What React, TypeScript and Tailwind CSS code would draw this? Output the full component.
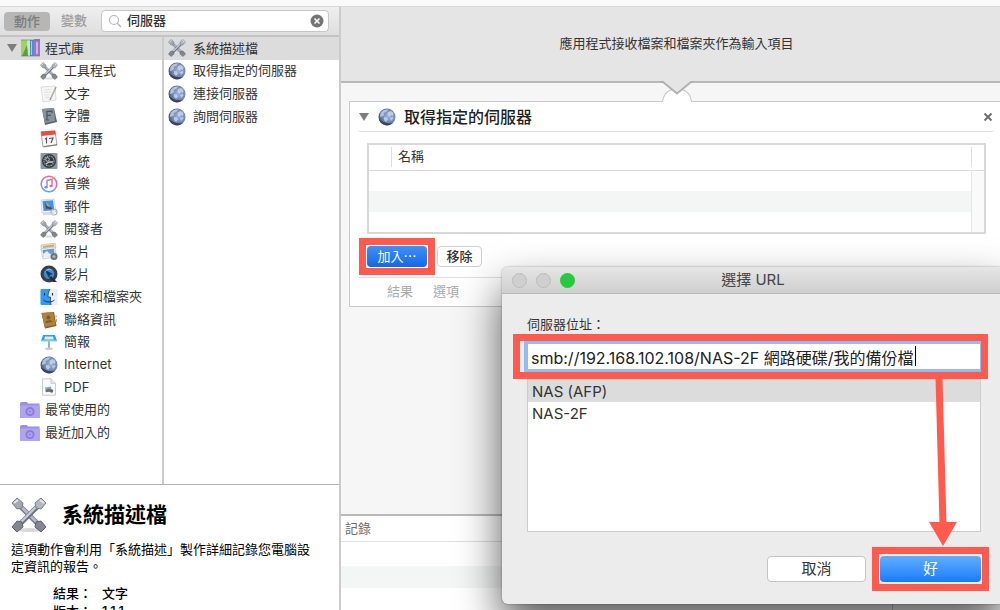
import React, { ReactNode } from "react";
import clsx from "clsx";

interface IconProps {
    className?: string;
}

interface ListItem {
    label: string;
    icon: (props: IconProps) => ReactNode;
}

function ToolsIcon({ className }: IconProps) {
    return (
        <svg viewBox="0 0 36 36" className={className} aria-hidden="true">
            <ellipse cx="18" cy="33" rx="12" ry="2" fill="#d9d9db" />
            <path d="M7 7 29 29" stroke="#777a8c" strokeWidth="5" />
            <path d="M7 6.500 29 28.500" stroke="#b6b8c8" strokeWidth="3" />
            <path d="M29 7 7 29" stroke="#6c6f82" strokeWidth="5" />
            <path d="M28.500 6.500 6.500 28.500" stroke="#c5c7d4" strokeWidth="2.500" />
            <path d="M1 6 6 1l6 5-1 5-5 1z" fill="#a5a7b2" stroke="#7b7d89" strokeWidth="1" />
            <path d="M35 6 30 1l-6 5 1 5 5 1z" fill="#b4b6c0" stroke="#7b7d89" strokeWidth="1" />
            <path d="M1 30l5 5 6-5-1-5-5-1z" fill="#83858f" stroke="#5f616d" strokeWidth="1" />
            <path d="M35 30l-5 5-6-5 1-5 5-1z" fill="#83858f" stroke="#5f616d" strokeWidth="1" />
            <path d="M3 6l4-3M33 6l-4-3" stroke="#e6e7ec" strokeWidth="2" />
        </svg>
    );
}

function GlobeIcon({ className }: IconProps) {
    return (
        <svg viewBox="0 0 18 18" className={className} aria-hidden="true">
            <defs>
                <radialGradient id="globe" cx="0.6" cy="0.45" r="0.65">
                    <stop offset="0" stopColor="#a3b8de" />
                    <stop offset="0.6" stopColor="#6d85b0" />
                    <stop offset="1" stopColor="#3f4c69" />
                </radialGradient>
            </defs>
            <circle cx="9" cy="9" r="8.500" fill="url(#globe)" />
            <path d="M2.500 5c2-3 5-4 8-3.500L8 4 5.500 5l.5 2-2 1.500L2 9zM10 4l3-1 2.500 2-.5 3-2-1-1.500 1.500L9.500 7zM6 9l3 .5 1 2-2 2.500-2-2zM12 10l3-1 .5 1.500-2.500 2.500z" fill="#d5deef" opacity="0.7" />
            <path d="M.8 11c2 6 9 8.500 14 4-5 1-10-.5-14-4z" fill="#39445c" />
        </svg>
    );
}

function LibraryIcon({ className }: IconProps) {
    return (
        <svg viewBox="0 0 20 18" className={className} aria-hidden="true">
            <path d="M1 1h6v16H1z" fill="#a3d25f" />
            <path d="M2 17 7 6l2 11z" fill="#5f9c46" />
            <path d="M7 2h3v15H8z" fill="#cdeaa8" />
            <path d="M10 1h4v16h-4z" fill="#4b8ede" />
            <path d="M11 2h1v14h-1z" fill="#a9d2f7" />
            <path d="M14 0h6v17h-6z" fill="#9a77c9" />
            <path d="M16 3h2v12h-2z" fill="#c9b2e6" />
            <path d="M1 1h19M1 17h19" stroke="#70737c" strokeWidth="0.600" />
        </svg>
    );
}

function TextIcon({ className }: IconProps) {
    return (
        <svg viewBox="0 0 18 18" className={className} aria-hidden="true">
            <path d="M1 2 15 1l1 14-13 2z" fill="#f6f6f4" stroke="#cfcfcf" strokeWidth="0.700" />
            <path d="M4 5l7-.5M4 7.500l7-.5M4.500 10l5-.4M5 12.500l4-.4" stroke="#dcdcdc" strokeWidth="0.800" />
            <path d="M16 2 10 15" stroke="#9a9a9a" strokeWidth="1.500" />
            <path d="M15 4l-4 9" stroke="#dcc296" strokeWidth="0.600" />
        </svg>
    );
}

function FontIcon({ className }: IconProps) {
    return (
        <svg viewBox="0 0 18 18" className={className} aria-hidden="true">
            <path d="M2 2 14 1l3 14-12 3z" fill="#5d656d" />
            <path d="M2 2 14 1l1 13-10 2z" fill="#88929a" />
            <path d="M7 13V4.500l5-.4v2M7 8.500l4-.3M5.500 13H9" fill="none" stroke="#4a535b" strokeWidth="1.200" />
        </svg>
    );
}

function CalendarIcon({ className }: IconProps) {
    return (
        <svg viewBox="0 0 18 18" className={className} aria-hidden="true">
            <path d="M1 2 15 1l2 14-14 2z" fill="#fbfbfb" stroke="#8f8f8f" strokeWidth="0.800" />
            <path d="M1 1.500 15 .5l.6 4L1.500 6z" fill="#ee4b40" />
            <path d="M5 9l1.500-1v5.500M9 8.500l4-.5-2 5" fill="none" stroke="#555" strokeWidth="1.200" />
            <path d="M4 16.500l13-1.800" stroke="#777" strokeWidth="1" />
        </svg>
    );
}

function SystemIcon({ className }: IconProps) {
    return (
        <svg viewBox="0 0 18 18" className={className} aria-hidden="true">
            <rect x="0.500" y="1" width="17" height="16" rx="1" fill="#8a97a5" />
            <circle cx="9" cy="9" r="7" fill="#34383d" />
            <circle cx="9" cy="9" r="5" fill="none" stroke="#a3a8ad" strokeWidth="1.200" strokeDasharray="1.500 0.800" />
            <circle cx="7.500" cy="7.500" r="1.800" fill="none" stroke="#d0d3d6" strokeWidth="0.900" />
            <path d="M9 10h4M6 12l3-2" stroke="#c7cacd" strokeWidth="1.300" />
        </svg>
    );
}

function MusicIcon({ className }: IconProps) {
    return (
        <svg viewBox="0 0 18 18" className={className} aria-hidden="true">
            <defs>
                <linearGradient id="music" x1="0.800" y1="0" x2="0.200" y2="1">
                    <stop offset="0" stopColor="#f4686f" />
                    <stop offset="0.500" stopColor="#b07be0" />
                    <stop offset="1" stopColor="#43b6f3" />
                </linearGradient>
            </defs>
            <circle cx="9" cy="9" r="7.800" fill="#fff" stroke="url(#music)" strokeWidth="1.600" />
            <path d="M7 12V5.500l5-1.300v6.500" fill="none" stroke="url(#music)" strokeWidth="1.500" />
            <ellipse cx="6" cy="12.300" rx="1.600" ry="1.200" fill="#7b86e8" />
            <ellipse cx="11" cy="11" rx="1.600" ry="1.200" fill="#e0609a" />
        </svg>
    );
}

function MailIcon({ className }: IconProps) {
    return (
        <svg viewBox="0 0 18 18" className={className} aria-hidden="true">
            <path d="M1 2 14 1l2 13-14 1z" fill="#f4f4f4" stroke="#b4bcc6" strokeWidth="0.600" />
            <path d="M2.500 3 13 2.200l1.300 10L3.500 13z" fill="#4293e8" />
            <path d="M5 4c1 3 3 4 4 4l4 3-3 .5-2-1-2 .5z" fill="#5b4a3c" />
            <path d="M6 4l3 3 1 2-3-1z" fill="#b9a48c" />
            <circle cx="14" cy="14" r="3" fill="none" stroke="#aab3bd" strokeWidth="1.200" />
            <path d="M3 16h11" stroke="#cbd2da" strokeWidth="1.500" />
        </svg>
    );
}

function PhotosIcon({ className }: IconProps) {
    return (
        <svg viewBox="0 0 18 18" className={className} aria-hidden="true">
            <path d="M1 2 15 0l1 5L1 7z" fill="#ece4d4" stroke="#b8b4aa" strokeWidth="0.600" />
            <path d="M3 3l11-1.500v2L3 5z" fill="#d9a468" />
            <path d="M1 6 15 4l1 10-13 2z" fill="#f8f8f8" stroke="#b0b5ba" strokeWidth="0.600" />
            <path d="M2.500 7 14 5.500l.5 7-11 1.500z" fill="#5b9fd8" />
            <path d="M3 11l4-3 3 3 4-1 .5 3-11 1.500z" fill="#e9eff4" />
            <circle cx="14" cy="13.500" r="3.500" fill="#6d737a" />
            <circle cx="14" cy="13.500" r="1.600" fill="#a9b5c4" />
        </svg>
    );
}

function MovieIcon({ className }: IconProps) {
    return (
        <svg viewBox="0 0 18 18" className={className} aria-hidden="true">
            <circle cx="9" cy="9" r="8.500" fill="#3b3f45" />
            <circle cx="9" cy="8.800" r="5.300" fill="#2f8fe4" />
            <path d="M5 5l8 4-3 1-1 3z" fill="#20364f" />
            <path d="M5.500 6.500c1-2 4-3 6-1.500" stroke="#96d2fb" strokeWidth="1" fill="none" />
            <path d="M11 11l6 6h-4l-4-4z" fill="#2a2d31" />
        </svg>
    );
}

function FinderIcon({ className }: IconProps) {
    return (
        <svg viewBox="0 0 18 18" className={className} aria-hidden="true">
            <rect x="0.500" y="1" width="17" height="16" rx="1" fill="#e6edf4" />
            <path d="M1.500 1H10c-1.500 3-2 5-2 8h2.500c0 3 0 5 .5 8H1.500a1 1 0 0 1-1-1V2a1 1 0 0 1 1-1z" fill="#2c9df2" />
            <path d="M4.500 5v2.500M12.500 5v2.500" stroke="#1c2f44" strokeWidth="1.100" />
            <path d="M3.500 12c3 2.600 8 2.600 11 0" fill="none" stroke="#1c2f44" strokeWidth="0.900" />
            <path d="M10 1c-1.500 3-2 5-2 8h2.500c0 3 0 5 .5 8" fill="none" stroke="#1c2f44" strokeWidth="0.700" />
        </svg>
    );
}

function ContactsIcon({ className }: IconProps) {
    return (
        <svg viewBox="0 0 18 18" className={className} aria-hidden="true">
            <path d="M1.500 2 14 1l2.500 14L5 17.500z" fill="#7e5a2c" />
            <path d="M1.500 2 13 1.200 15.500 14 4.500 16z" fill="#b0803f" />
            <circle cx="8.500" cy="6.500" r="2" fill="#7d592c" />
            <path d="M5 12c.5-3 6.500-4 8-1z" fill="#7d592c" />
            <path d="M16 4v3M16.500 8v3" stroke="#caa15f" strokeWidth="1" />
        </svg>
    );
}

function KeynoteIcon({ className }: IconProps) {
    return (
        <svg viewBox="0 0 18 18" className={className} aria-hidden="true">
            <path d="M3 2h12l2 6H1z" fill="#2f9fe6" />
            <path d="M5 3.500h8l.8 3H4.200z" fill="#dff0fb" />
            <path d="M1 7h16v1.500H1z" fill="#7cc4ef" />
            <path d="M9 8.500V15" stroke="#90979e" strokeWidth="1.600" />
            <ellipse cx="9" cy="15.800" rx="4" ry="1.300" fill="#c9ced3" />
        </svg>
    );
}

function PdfIcon({ className }: IconProps) {
    return (
        <svg viewBox="0 0 18 18" className={className} aria-hidden="true">
            <path d="M2.500.8h8.500l4.500 4.500v12h-13z" fill="#fafafa" stroke="#bdbdbd" strokeWidth="0.800" />
            <path d="M11 .8v4.500h4.500" fill="#ececec" stroke="#bdbdbd" strokeWidth="0.800" />
            <path d="M5 9.500l6-1 .8 5-6 .8z" fill="#86a9c7" />
            <path d="M5.500 12l3-1.500 3 1.500v1.500l-5.500.5z" fill="#6a7179" />
            <circle cx="11.500" cy="13" r="1.800" fill="#60666d" />
        </svg>
    );
}

function SmartFolderIcon({ className }: IconProps) {
    return (
        <svg viewBox="0 0 20 18" className={className} aria-hidden="true">
            <path d="M0 2.500 1 1h6l1 1.500h11.500V17H0z" fill="#9d90e4" />
            <path d="M0 4.500h20V17H0z" fill="#b0a4f0" />
            <circle cx="10" cy="10.500" r="3.600" fill="none" stroke="#8b7cda" strokeWidth="2" />
            <circle cx="10" cy="10.500" r="1" fill="#8b7cda" />
        </svg>
    );
}

const categories: ListItem[] = [
    { label: "工具程式", icon: ToolsIcon },
    { label: "文字", icon: TextIcon },
    { label: "字體", icon: FontIcon },
    { label: "行事曆", icon: CalendarIcon },
    { label: "系統", icon: SystemIcon },
    { label: "音樂", icon: MusicIcon },
    { label: "郵件", icon: MailIcon },
    { label: "開發者", icon: ToolsIcon },
    { label: "照片", icon: PhotosIcon },
    { label: "影片", icon: MovieIcon },
    { label: "檔案和檔案夾", icon: FinderIcon },
    { label: "聯絡資訊", icon: ContactsIcon },
    { label: "簡報", icon: KeynoteIcon },
    { label: "Internet", icon: GlobeIcon },
    { label: "PDF", icon: PdfIcon },
];

const smartFolders = ["最常使用的", "最近加入的"];

const actions: ListItem[] = [
    { label: "系統描述檔", icon: ToolsIcon },
    { label: "取得指定的伺服器", icon: GlobeIcon },
    { label: "連接伺服器", icon: GlobeIcon },
    { label: "詢問伺服器", icon: GlobeIcon },
];

function Sidebar() {
    return (
        <aside className="flex w-[341px] shrink-0 flex-col border-r-2 border-[#cbcbcb] bg-white">
            <div className="flex h-[30px] shrink-0 items-center border-b-2 border-[#c4c4c4] bg-linear-to-b from-[#efefef] to-[#dedede] pr-[10px] pl-1">
                <button className="h-[19px] w-[46px] shrink-0 rounded bg-[#b6b6b6] font-medium text-[#7c7c7c]">動作</button>
                <button className="ml-[11px] shrink-0 font-medium text-[#9b9b9b]">變數</button>
                <div className="ml-[14px] flex h-[22px] min-w-0 flex-1 items-center rounded border border-[#c6c6c6] bg-white pr-1 pl-[5px]">
                    <svg viewBox="0 0 16 16" className="size-4 shrink-0" aria-hidden="true">
                        <circle cx="7" cy="7" r="4.500" fill="none" stroke="#b5b5b5" strokeWidth="1.200" />
                        <path d="M10.300 10.300 14 14" stroke="#b5b5b5" strokeWidth="1.300" />
                    </svg>
                    <input aria-label="搜尋" defaultValue="伺服器" className="ml-1 min-w-0 flex-1 bg-transparent font-medium text-[#333] outline-none" />
                    <button aria-label="清除" className="shrink-0">
                        <svg viewBox="0 0 14 14" className="size-[14px]" aria-hidden="true">
                            <circle cx="7" cy="7" r="6.500" fill="#757575" />
                            <path d="m4.500 4.500 5 5m0-5-5 5" stroke="#fff" strokeWidth="1.500" />
                        </svg>
                    </button>
                </div>
            </div>

            <div className="flex min-h-0 flex-1">
                <ul className="flex h-[407px] w-[162px] flex-col">
                    <li className="flex flex-1 items-center bg-[#dcdcdc] pl-[7px]">
                        <svg viewBox="0 0 10 8" className="h-2 w-[10px]" aria-hidden="true">
                            <path d="M0 0h10L5 8z" fill="#7d7d7d" />
                        </svg>
                        <LibraryIcon className="ml-[3px] h-[18px] w-5" />
                        <span className="ml-[5px]">程式庫</span>
                    </li>
                    {categories.map(({ label, icon: Icon }) => (
                        <li key={label} className="flex flex-1 items-center pl-10">
                            <Icon className="size-[18px]" />
                            <span className="ml-[6px]">{label}</span>
                        </li>
                    ))}
                    {smartFolders.map((label) => (
                        <li key={label} className="flex flex-1 items-center pl-5">
                            <SmartFolderIcon className="h-[18px] w-5" />
                            <span className="ml-[5px]">{label}</span>
                        </li>
                    ))}
                </ul>
                <div className="flex-1 border-l-2 border-[#cbcbcb]">
                    <ul className="flex h-[91px] flex-col">
                        {actions.map(({ label, icon: Icon }, i) => (
                            <li key={label} className={clsx("flex flex-1 items-center pl-1", i === 0 && "bg-[#dcdcdc]")}>
                                <Icon className="size-[18px]" />
                                <span className="ml-[7px]">{label}</span>
                            </li>
                        ))}
                    </ul>
                </div>
            </div>

            <section className="h-[126px] shrink-0 overflow-hidden border-t border-[#b4b4b4] px-[11px] pt-3 text-black">
                <div className="flex items-center">
                    <ToolsIcon className="size-9" />
                    <h2 className="ml-[15px] text-[21px] leading-9 font-bold">系統描述檔</h2>
                </div>
                <p className="mt-2 leading-[17px]">
                    這項動作會利用「系統描述」製作詳細記錄您電腦設
                    <br />
                    定資訊的報告。
                </p>
                <dl className="mt-[9px] grid grid-cols-[91px_1fr] leading-[18px] font-medium">
                    <dt className="pl-[42px]">結果：</dt>
                    <dd>文字</dd>
                    <dt className="pl-[42px]">版本：</dt>
                    <dd>1.1.1</dd>
                </dl>
            </section>
        </aside>
    );
}

function ActionCard() {
    return (
        <section className="-mr-1 ml-2 border border-[#c9c9c9] bg-white pr-[10px] pl-[9px]">
            <header className="flex h-[30px] items-center border-b border-[#dcdfe0]">
                <svg viewBox="0 0 10 8" className="h-2 w-[10px]" aria-hidden="true">
                    <path d="M0 0h10L5 8z" fill="#7d7d7d" />
                </svg>
                <GlobeIcon className="ml-[9px] size-[18px]" />
                <h3 className="ml-2 text-[16px] font-medium text-[#222]">取得指定的伺服器</h3>
                <button aria-label="關閉" className="ml-auto">
                    <svg viewBox="0 0 10 10" className="size-[10px]" aria-hidden="true">
                        <path d="m1.500 1.500 7 7m0-7-7 7" stroke="#6e6e6e" strokeWidth="2" />
                    </svg>
                </button>
            </header>

            <div className="pt-[11px] pr-[7px] pl-2">
                <table className="w-full border-2 border-[#d8d8d8] text-left">
                    <thead>
                        <tr className="h-[26px] border-b border-[#d9d9d9]">
                            <th className="w-6 p-0">
                                <div className="h-5 border-r border-[#dedede]" />
                            </th>
                            <th className="p-0 pb-[2px] pl-[6px] font-normal">名稱</th>
                            <th className="w-[14px] p-0">
                                <div className="h-5 border-l border-[#dedede]" />
                            </th>
                        </tr>
                    </thead>
                    <tbody>
                        {[0, 1, 2].map((row) => (
                            <tr key={row} className={clsx("h-[21px]", row === 1 && "bg-[#f4f5f5]")}>
                                <td colSpan={2} />
                                <td className="border-l border-[#e6e6e6] bg-[#fafafa]" />
                            </tr>
                        ))}
                    </tbody>
                </table>

                <div className="mt-3 flex h-[21px] gap-[10px]">
                    <div className="relative">
                        <button className="h-[21px] w-[60px] rounded bg-linear-to-b from-[#3f90f7] to-[#1268e6] text-white">加入⋯</button>
                        <div className="pointer-events-none absolute -inset-2 border-[7px] border-[#ff5a4e]" />
                    </div>
                    <button className="h-[21px] w-[45px] rounded border border-[#cfcfcf] bg-white font-medium text-[#333]">移除</button>
                </div>
            </div>

            <footer className="mt-[10px] flex h-[29px] items-center gap-5 border-t border-[#dcdfe0] pl-7 text-[#a9a9a9]">
                <button>結果</button>
                <button>選項</button>
            </footer>
        </section>
    );
}

function Workflow() {
    return (
        <main className="flex min-w-0 flex-1 flex-col overflow-hidden bg-[#f6f6f6]">
            <div className="flex h-[76px] shrink-0 items-center justify-center border-b-2 border-[#b9b9b9] bg-[#e5e5e5] pl-3">
                <p>應用程式接收檔案和檔案夾作為輸入項目</p>
            </div>
            <div className="relative min-h-0 flex-1 pt-[18px]">
                <ActionCard />
                {/* connector between the input bar and the first action */}
                <div className="absolute inset-x-0 -top-[2px] flex justify-center pl-3">
                    <svg viewBox="0 0 34 22" className="h-[22px] w-[34px]" aria-hidden="true">
                        <path d="M2 22c1-9 7-13 15-13s14 4 15 13z" fill="#fff" />
                        <path d="M0 20.500h2.500C4 11 10 8 17 8s13 3 14.500 12.500H34" fill="none" stroke="#c9c9c9" strokeWidth="1.200" />
                        <path d="M1 0h32L17 13z" fill="#e5e5e5" />
                        <path d="M0 1h3l14 11.500L31 1h3" fill="none" stroke="#b0b0b0" strokeWidth="1.800" />
                    </svg>
                </div>
            </div>
            <section className="h-[96px] shrink-0 overflow-hidden border-t-2 border-[#b9b9b9] bg-white">
                <h4 className="h-[26px] border-b border-[#dedede] pl-1 leading-6 text-[#6b6b6b]">記錄</h4>
                <div className="h-6" />
                <div className="h-[22px] bg-[#f4f5f5]" />
                <div className="grid h-6 grid-cols-[1fr_107px]">
                    <div className="border-r border-[#c9c9c9]" />
                </div>
            </section>
        </main>
    );
}

function UrlDialog() {
    return (
        <div
            role="dialog"
            aria-labelledby="dialog-title"
            className="absolute top-[267px] -right-1 left-[502px] rounded-md bg-[#ececec] shadow-[0_22px_44px_rgba(0,0,0,0.65),0_0_2px_rgba(0,0,0,0.4)]"
        >
            <div className="flex h-[27px] items-center rounded-t-md border-b border-[#b9b9b9] bg-linear-to-b from-[#e6e6e6] to-[#cfcfcf] px-[10px]">
                <div className="flex flex-1 gap-[9px]">
                    <span className="size-[15px] rounded-full border border-[#bcbcbc] bg-[#cfcfcf]" />
                    <span className="size-[15px] rounded-full border border-[#bcbcbc] bg-[#cfcfcf]" />
                    <span className="size-[15px] rounded-full bg-[#28c83f]" />
                </div>
                <h2 id="dialog-title" className="text-[15px] text-[#444]">選擇 URL</h2>
                <div className="flex-1" />
            </div>

            <div className="pt-5 pr-[23px] pb-[22px] pl-[25px]">
                <label htmlFor="server-url" className="block leading-5">伺服器位址：</label>
                <div className="relative mt-[7px] -ml-[3px]">
                    <input
                        id="server-url"
                        defaultValue="smb://192.168.102.108/NAS-2F 網路硬碟/我的備份檔"
                        className="block h-[31px] w-full border-y-[3px] border-r border-l-4 border-[#93bdf0] bg-white pl-[3px] text-[16px] text-[#222] outline-none"
                    />
                    {/* text caret */}
                    <span className="absolute top-[5px] left-[391px] h-5 w-px bg-black" />
                    <div className="pointer-events-none absolute -inset-y-[7px] -right-[7px] -left-[11px] border-[7px] border-[#ff5a4e]" />
                    <svg viewBox="0 0 30 168" className="absolute top-[37px] right-6 z-10 h-[168px] w-[30px]" aria-hidden="true">
                        <path d="M12 0 16 146" stroke="#ff5a4e" strokeWidth="7" />
                        <path d="M2 144h28L16 168z" fill="#ff5a4e" />
                    </svg>
                </div>
                <ul className="mt-[7px] h-[153px] border border-[#cdcdcd] bg-white text-[15px] text-[#333]">
                    <li className="h-[22px] bg-[#dcdcdc] pl-1 leading-6">NAS (AFP)</li>
                    <li className="h-[22px] pl-1 leading-6">NAS-2F</li>
                </ul>
                <div className="mt-6 flex justify-end gap-[14px] text-[15px]">
                    <button className="h-[26px] w-[99px] rounded border border-[#c4c4c4] bg-white text-[#333]">取消</button>
                    <div className="relative">
                        <button className="block h-[26px] w-[101px] rounded bg-linear-to-b from-[#62aefc] to-[#147bfb] text-white">好</button>
                        <div className="pointer-events-none absolute -inset-x-2 -inset-y-[9px] border-[7px] border-[#ff5a4e]" />
                    </div>
                </div>
            </div>
        </div>
    );
}

export default function App() {
    return (
        <div className="relative flex h-screen flex-col overflow-hidden bg-white font-['Inter','Noto_Sans_CJK_TC',sans-serif] text-[13px] text-[#333]">
            <div className="h-[7px] shrink-0 border-b border-[#d9d9d9] bg-[#fafafa]" />
            <div className="flex min-h-0 flex-1">
                <Sidebar />
                <Workflow />
            </div>
            <UrlDialog />
        </div>
    );
}
